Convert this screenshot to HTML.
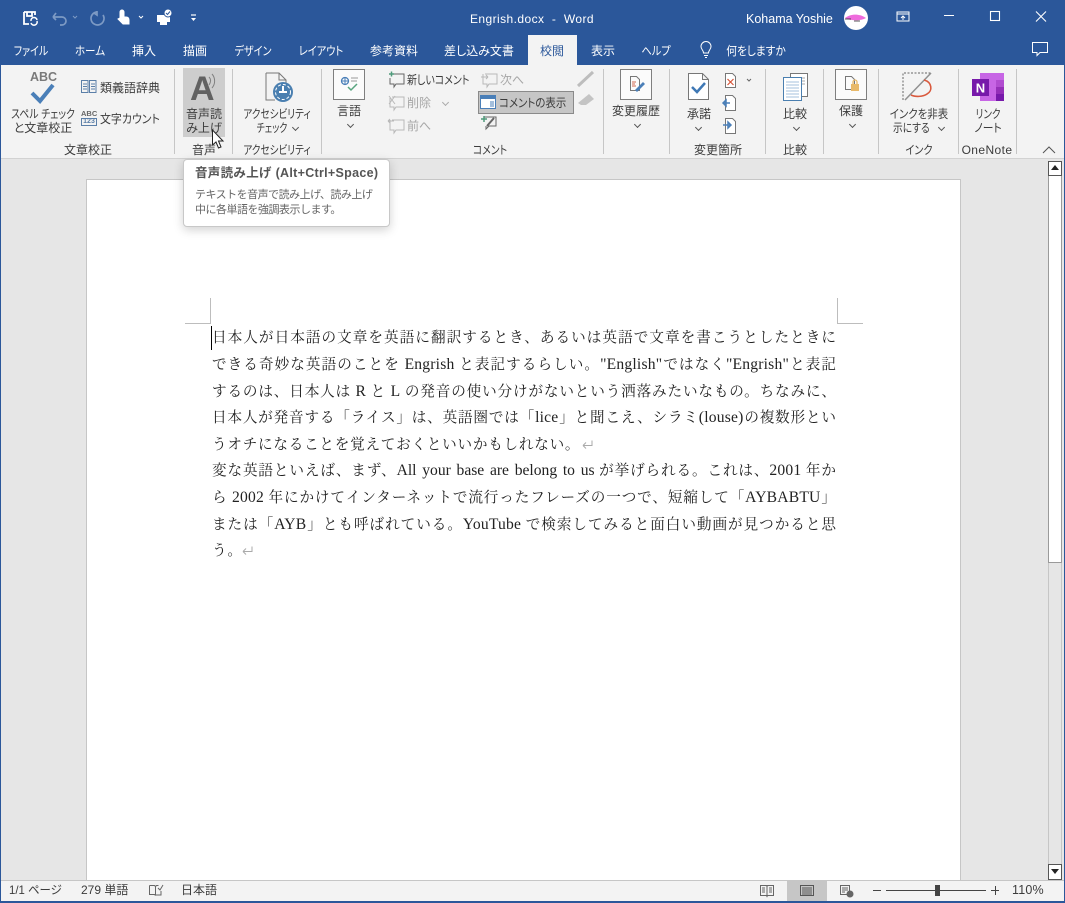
<!DOCTYPE html>
<html lang="ja"><head><meta charset="utf-8"><title>Engrish.docx - Word</title>
<style>
*{box-sizing:border-box}
html,body{margin:0;padding:0;width:1065px;height:903px;overflow:hidden;background:#e6e6e6;font-family:"Liberation Sans","Noto Sans CJK JP",sans-serif;color:#333}
.a{position:absolute;white-space:nowrap}
.t{position:absolute;white-space:nowrap;font-size:12px;line-height:15px;color:#3c3c3c;font-feature-settings:"palt";transform-origin:0 50%}
.c{text-align:center;transform:translateX(-50%);transform-origin:50% 50%}
.tab{position:absolute;top:43px;color:#fff;font-size:12px;line-height:16px;white-space:nowrap;font-feature-settings:"palt";transform:translateX(-50%)}
.sep{position:absolute;top:69px;width:1px;height:85px;background:#c6c6c6}
.dis{color:#a6a6a6}
.ch{position:absolute;width:5px;height:5px;border-right:1px solid #555;border-bottom:1px solid #555;transform:rotate(45deg)}
.l{position:absolute;left:212px;width:624px;height:20px;font-family:"Liberation Serif","Noto Serif CJK JP","Noto Serif CJK SC",serif;font-size:14.6px;line-height:20px;color:#222;white-space:nowrap;text-align:justify;text-align-last:justify;text-justify:inter-character}
.left{text-align-last:left;letter-spacing:.75px}
.e{font-size:15.6px;letter-spacing:.2px}
.b{display:inline-block;font-size:15.6px;text-align:justify;text-align-last:justify;white-space:normal;height:20px;vertical-align:top}
svg{position:absolute;overflow:visible}
</style></head><body>
<!-- title bar -->
<div class="a" style="left:0;top:0;width:1065px;height:65px;background:#2b579a"></div>
<svg style="left:0;top:0" width="240" height="36" fill="none" stroke="#fff">
<path d="M24 12h11v3M24 12v12h5M27 12v4h5v-4" stroke-width="1.800"/><path d="M31 21a3 3 0 0 1 6-1M37 21a3 3 0 0 1-6 2" stroke-width="1.500"/>
<path d="M53 17h9a4 4 0 0 1 0 8h-2M53 17l3-4M53 17l3 3" stroke="#7d9ac4" stroke-width="1.700"/>
<path d="M73 16l2 2 2-2" stroke="#7d9ac4"/>
<path d="M97 12a6.500 6.500 0 1 0 6 3M97 11v4l-3-2" stroke="#7d9ac4" stroke-width="1.700"/>
<path d="M120 12a2 2 0 0 1 4 0v5h2c2 0 3 1 3 3v4h-6l-5-5 2-1z" fill="#fff" stroke-width="1"/>
<path d="M139 16l2 2 2-2"/>
<path d="M157 15h13v7h-3v3h-7v-3h-3z" fill="#fff" stroke="none"/><circle cx="168" cy="13" r="4" fill="#fff" stroke="#2b579a"/><path d="M166 13l1.500 1.500 2.500-3" stroke="#2b579a"/>
<path d="M191 15h5" stroke-width="1.200"/><path d="M191 18h5l-2.500 3z" fill="#fff" stroke="none"/>
</svg>
<div class="a" style="left:470px;top:11px;color:#fff;font-size:12px;line-height:16px;letter-spacing:.42px">Engrish.docx&nbsp; -&nbsp; Word</div>
<div class="a" style="left:746px;top:11px;color:#fff;font-size:12.500px;line-height:16px">Kohama Yoshie</div>
<svg style="left:840px;top:0" width="225" height="36" fill="none" stroke="#fff">
<circle cx="16" cy="18" r="12" fill="#fff" stroke="none"/><path d="M5 18c5-4 14-5 21 0-5 3-15 3-21 0z" fill="#ee6bdc" stroke="none"/><path d="M5 19h6M14 21h6" stroke="#222" stroke-width=".8"/>
<path d="M57 12h12v9H57zM57 14h12M63 20v-4M61 18l2-2 2 2" stroke-width="1"/>
<path d="M104 15.500h10" stroke-width="1"/>
<rect x="150.500" y="11.500" width="9" height="9" stroke-width="1.100"/>
<path d="M196 11.500l10 10M206 11.500l-10 10" stroke-width="1.100"/>
</svg>
<!-- tabs -->
<div class="a" style="left:528px;top:35px;width:49px;height:30px;background:#f3f3f3"></div>
<div class="tab" style="left:31px;transform:translateX(-50%) scaleX(.83)">ファイル</div>
<div class="tab" style="left:90px;transform:translateX(-50%) scaleX(.88)">ホーム</div>
<div class="tab" style="left:144px">挿入</div>
<div class="tab" style="left:195px">描画</div>
<div class="tab" style="left:253px;transform:translateX(-50%) scaleX(.84)">デザイン</div>
<div class="tab" style="left:321px;transform:translateX(-50%) scaleX(.85)">レイアウト</div>
<div class="tab" style="left:394px">参考資料</div>
<div class="tab" style="left:479px">差し込み文書</div>
<div class="tab" style="left:552px;color:#2b579a">校閲</div>
<div class="tab" style="left:603px">表示</div>
<div class="tab" style="left:656px;transform:translateX(-50%) scaleX(.85)">ヘルプ</div>
<svg style="left:698px;top:41px" width="16" height="18" fill="none" stroke="#fff"><path d="M5.500 12c0-3-2.500-3.500-2.500-6.500a5 5 0 0 1 10 0c0 3-2.500 3.500-2.500 6.500zM6 14.500h4M7 16.500h2"/></svg>
<div class="tab" style="left:756px;transform:translateX(-50%) scaleX(.89)">何をしますか</div>
<svg style="left:1032px;top:42px" width="18" height="16" fill="none" stroke="#fff"><path d="M.5.500h15v10H8l-3 3v-3H.500z"/></svg>
<!-- ribbon -->
<div class="a" style="left:1px;top:65px;width:1063px;height:93px;background:#f3f3f3"></div>
<div class="a" style="left:0;top:158px;width:1065px;height:1px;background:#d2d2d2"></div>
<div class="sep" style="left:174px"></div><div class="sep" style="left:232px"></div><div class="sep" style="left:321px"></div><div class="sep" style="left:603px"></div><div class="sep" style="left:669px"></div><div class="sep" style="left:765px"></div><div class="sep" style="left:823px"></div><div class="sep" style="left:878px"></div><div class="sep" style="left:958px"></div><div class="sep" style="left:1016px"></div>
<div class="a" style="left:183px;top:68px;width:42px;height:69px;background:#cdcdcd"></div>

<div class="a" style="left:30px;top:70px;font-size:12.500px;line-height:14px;font-weight:bold;color:#7a7a7a">ABC</div>
<svg style="left:30px;top:83px" width="26" height="22" fill="none"><path d="M2 10l8 8L23 2" stroke="#4a7fb8" stroke-width="4"/></svg>
<div class="t c" style="left:43px;top:107px;transform:translateX(-50%) scaleX(.82)">スペル チェック</div>
<div class="t c" style="left:43px;top:121px">と文章校正</div>
<svg style="left:81px;top:80px" width="16" height="14" fill="none" stroke="#5b7fa8"><path d="M.5.500h6.500v12H.5zM8.500.500H15v12H8.500zM2 4h4M2 6.500h4M2 9h4M10 4h4M10 6.500h4M10 9h4" stroke-width="1"/></svg>
<div class="t" style="left:100px;top:81px">類義語辞典</div>
<div class="a" style="left:81px;top:110px;font-size:7.500px;line-height:8px;font-weight:bold;color:#666">ABC</div>
<div class="a" style="left:81px;top:118px;width:16px;height:8px;border:1px solid #5b7fa8;font-size:7px;line-height:6px;font-weight:bold;color:#5b7fa8;text-align:center">123</div>
<div class="t" style="left:100px;top:112px;transform:scaleX(.91)">文字カウント</div>
<div class="t c" style="left:88px;top:143px">文章校正</div>

<div class="a" style="left:190px;top:70px;font-size:34px;line-height:38px;font-weight:bold;color:#626262">A</div>
<svg style="left:208px;top:72px" width="12" height="20" fill="none" stroke="#808080"><path d="M1 5c2 2 2 5 0 8M4 2c3.500 4 3.500 10 0 14" stroke-width="1"/></svg>
<div class="t c" style="left:204px;top:107px">音声読</div>
<div class="t c" style="left:204px;top:121px">み上げ</div>
<svg style="left:211px;top:129px" width="13" height="21"><path d="M1.500 1v15l3.500-3 2.500 6 2.500-1-2.500-6h4.500z" fill="#fff" stroke="#222" stroke-width="1"/></svg>
<div class="t c" style="left:204px;top:143px">音声</div>

<svg style="left:265px;top:72px" width="30" height="34" fill="none"><path d="M1 1h13l7 7v12M1 1v27h9M14 1v7h7" stroke="#777"/><circle cx="18" cy="20" r="10" fill="#4a7fb0"/><circle cx="18" cy="20" r="7.500" fill="none" stroke="#fff" stroke-width="1" stroke-dasharray="3 2"/><path d="M18 14v6M14 20h8" stroke="#fff" stroke-width="2"/></svg>
<div class="t c" style="left:277px;top:107px;transform:translateX(-50%) scaleX(.8)">アクセシビリティ</div>
<div class="t c" style="left:272px;top:121px;transform:translateX(-50%) scaleX(.75)">チェック</div>
<i class="ch" style="left:293px;top:125px"></i>
<div class="t c" style="left:277px;top:143px;transform:translateX(-50%) scaleX(.8)">アクセシビリティ</div>

<div class="a" style="left:333px;top:69px;width:32px;height:31px;border:1px solid #7f7f7f;background:#fbfbfb"></div>
<svg style="left:340px;top:76px" width="20" height="16" fill="none"><circle cx="5" cy="5" r="3.500" stroke="#4a7fb8" stroke-width="1.300"/><path d="M1 5h8M5 1v8" stroke="#4a7fb8"/><path d="M8 11l3 3 6-6" stroke="#58a57f" stroke-width="1.500"/><path d="M11 2h7M11 5h6" stroke="#999"/></svg>
<div class="t c" style="left:349px;top:104px">言語</div>
<i class="ch" style="left:348px;top:122px"></i>

<svg style="left:388px;top:71px" width="110" height="70" fill="none" stroke="#8a8a8a">
<path d="M4 3h12v10H8l-2 3v-3H2V7" stroke="#666"/><path d="M1 3h5M3.500.500v5" stroke="#4f9a7b" stroke-width="1.500"/>
<g stroke="#b8b8b8"><path d="M4 26h12v10H8l-2 3v-3H2V27M1 25l6 8M7 25l-6 8"/><path d="M4 49h12v10H8l-2 3v-3H2V49M0 50h6M0 50l2-2M0 50l2 2"/><path d="M97 3h12v10h-8l-2 3v-3h-4V3M93 6h7M100 6l-2-2M100 6l-2 2"/></g>
</svg>
<div class="t" style="left:407px;top:73px;transform:scaleX(.83)">新しいコメント</div>
<div class="t dis" style="left:500px;top:73px">次へ</div>
<div class="t dis" style="left:407px;top:96px">削除</div>
<i class="ch" style="left:443px;top:100px;border-color:#aaa"></i>
<div class="t dis" style="left:407px;top:119px">前へ</div>
<div class="a" style="left:478px;top:91px;width:96px;height:23px;background:#c6c6c6;border:1px solid #8a8a8a"></div>
<svg style="left:480px;top:95px" width="17" height="15"><rect x=".5" y=".5" width="15" height="13" fill="#fff" stroke="#4a7fb8"/><rect x="1" y="1" width="15" height="3" fill="#4a7fb8"/><path d="M10 7h4M10 9h4M10 11h4" stroke="#4a7fb8"/></svg>
<div class="t" style="left:499px;top:96px;transform:scaleX(.87)">コメントの表示</div>
<svg style="left:481px;top:116px" width="18" height="16" fill="none"><path d="M3 1h12v9H8l-3 3v-3" stroke="#666"/><path d="M0 3h6M3 0v6" stroke="#4f9a7b" stroke-width="1.500"/><path d="M6 10l7-8" stroke="#666" stroke-width="2"/></svg>
<svg style="left:577px;top:70px" width="18" height="40" fill="none"><path d="M1 16L16 2" stroke="#bdbdbd" stroke-width="3"/><path d="M1 33l11-9 5 5-8 6H4z" fill="#c4c4c4"/></svg>
<div class="t c" style="left:490px;top:143px;transform:translateX(-50%) scaleX(.82)">コメント</div>

<div class="a" style="left:620px;top:69px;width:32px;height:31px;border:1px solid #7f7f7f;background:#fbfbfb"></div>
<svg style="left:630px;top:76px" width="16" height="17" fill="none"><path d="M.5.500h6l3 3v11H.5z" stroke="#777"/><path d="M2 6h4M2 8h3M2 10h4" stroke="#d06a50"/><path d="M5 14l8-8 2 2-8 8z" fill="#4a7fb8"/></svg>
<div class="t c" style="left:636px;top:104px">変更履歴</div>
<i class="ch" style="left:635px;top:122px"></i>

<svg style="left:688px;top:73px" width="22" height="28" fill="none"><path d="M.5.500h14l6 6v20H.500zM14.500.500v6h6" stroke="#777" fill="#fff"/><path d="M4 14l5 5 8-9" stroke="#3f78b5" stroke-width="2.500"/></svg>
<div class="t c" style="left:699px;top:107px">承諾</div>
<i class="ch" style="left:696px;top:125px"></i>
<svg style="left:725px;top:73px" width="24" height="62" fill="none">
<path d="M.5.500h7l3 3v11H.5z" stroke="#777" fill="#fff"/><path d="M2.500 6l6 6M8.500 6l-6 6" stroke="#d6553a" stroke-width="1.200"/>
<path d="M.5 22.500h7l3 3v12H.5z" stroke="#777" fill="#fff"/><path d="M-2 30h7M-2 30l3-3v6z" stroke="#4a7fb8" stroke-width="1.500"/>
<path d="M.5 45.500h7l3 3v12H.5z" stroke="#777" fill="#fff"/><path d="M-2 52h7M6 52l-3-3v6z" stroke="#4a7fb8" stroke-width="1.500"/>
<path d="M23 6l2 2 2-2" stroke="#666" transform="translate(-1 0)"/>
</svg>
<div class="t c" style="left:718px;top:143px">変更箇所</div>

<svg style="left:783px;top:73px" width="26" height="28"><rect x="7.500" y=".5" width="17" height="23" fill="#fff" stroke="#777"/><path d="M15 5h7M15 8h7M15 11h7" stroke="#aaa"/><rect x=".5" y="4.500" width="18" height="23" fill="#fff" stroke="#4a7fb0"/><path d="M3 9h13M3 12h13M3 15h13M3 18h13M3 21h13M3 24h13" stroke="#a6c0dc"/></svg>
<div class="t c" style="left:795px;top:107px">比較</div>
<i class="ch" style="left:794px;top:125px"></i>
<div class="t c" style="left:795px;top:143px">比較</div>

<div class="a" style="left:835px;top:69px;width:32px;height:31px;border:1px solid #7f7f7f;background:#fbfbfb"></div>
<svg style="left:845px;top:76px" width="16" height="17" fill="none"><path d="M.5.500h6l3 3v10H.5z" stroke="#777"/><rect x="6" y="8" width="8" height="7" fill="#e8b96a"/><path d="M8 8V6a2 2 0 0 1 4 0v2" stroke="#e8b96a" stroke-width="1.300"/></svg>
<div class="t c" style="left:851px;top:104px">保護</div>
<i class="ch" style="left:850px;top:122px"></i>

<svg style="left:902px;top:72px" width="32" height="30" fill="none"><path d="M1 28V1h28" stroke="#666" stroke-dasharray="2 1.500"/><path d="M29 1L3 28" stroke="#909090" stroke-width="1.500"/><path d="M22 8c8 2 9 11 3 14-4 3-12 3-16 1" stroke="#d9593d" stroke-width="1.600"/></svg>
<div class="t c" style="left:919px;top:107px;transform:translateX(-50%) scaleX(.87)">インクを非表</div>
<div class="t" style="left:893px;top:121px;transform:scaleX(.81)">示にする</div>
<i class="ch" style="left:939px;top:125px"></i>
<div class="t c" style="left:919px;top:143px;transform:translateX(-50%) scaleX(.85)">インク</div>

<svg style="left:972px;top:73px" width="32" height="29"><rect x="8" width="24" height="28" fill="#c765e5"/><rect x="24" y="7" width="8" height="7" fill="#b14cd0"/><rect x="24" y="14" width="8" height="7" fill="#952fb8"/><rect x="24" y="21" width="8" height="7" fill="#7719aa"/><rect y="6" width="17" height="17" fill="#7719aa"/><text x="8.500" y="19.500" fill="#fff" font-size="13" font-weight="bold" text-anchor="middle" font-family="Liberation Sans">N</text></svg>
<div class="t c" style="left:988px;top:107px;transform:translateX(-50%) scaleX(.8)">リンク</div>
<div class="t c" style="left:988px;top:121px;transform:translateX(-50%) scaleX(.9)">ノート</div>
<div class="t c" style="left:987px;top:143px;letter-spacing:.4px">OneNote</div>
<svg style="left:1042px;top:146px" width="14" height="8" fill="none"><path d="M1 7l6-6 6 6" stroke="#555"/></svg>

<!-- doc page -->
<div class="a" style="left:86px;top:179px;width:875px;height:702px;background:#fff;border:1px solid #c6c6c6;border-bottom:0"></div>
<div class="a" style="left:210px;top:298px;width:1px;height:25px;background:#bdbdbd"></div>
<div class="a" style="left:185px;top:323px;width:26px;height:1px;background:#bdbdbd"></div>
<div class="a" style="left:837px;top:298px;width:1px;height:25px;background:#bdbdbd"></div>
<div class="a" style="left:837px;top:323px;width:26px;height:1px;background:#bdbdbd"></div>
<div class="a" style="left:211px;top:326px;width:1px;height:24px;background:#000"></div>

<div class="l" style="top:328px">日本人が日本語の文章を英語に翻訳するとき、あるいは英語で文章を書こうとしたときに</div>
<div class="l" style="top:355px">できる奇妙な英語のことを <span class="e">Engrish</span> と表記するらしい。<span class="e">"English"</span>ではなく<span class="e">"Engrish"</span>と表記</div>
<div class="l" style="top:382px">するのは、日本人は <span class="e">R</span> と <span class="e">L</span> の発音の使い分けがないという洒落みたいなもの。ちなみに、</div>
<div class="l" style="top:408px">日本人が発音する「ライス」は、英語圏では「<span class="e">lice</span>」と聞こえ、シラミ<span class="e">(louse)</span>の複数形とい</div>
<div class="l left" style="top:435px">うオチになることを覚えておくといいかもしれない。</div>
<svg style="left:582px;top:440px" width="11" height="9" fill="none" stroke="#aaa"><path d="M10 .5v5H1M1 5.500l3-3M1 5.500l3 3"/></svg>
<div class="l" style="top:461px">変な英語といえば、まず、<span class="b" style="width:198px">All your base are belong to us</span> が挙げられる。これは、<span class="e">2001</span> 年か</div>
<div class="l" style="top:488px">ら <span class="e">2002</span> 年にかけてインターネットで流行ったフレーズの一つで、短縮して「<span class="e">AYBABTU</span>」</div>
<div class="l" style="top:515px">または「<span class="e">AYB</span>」とも呼ばれている。<span class="e">YouTube</span> で検索してみると面白い動画が見つかると思</div>
<div class="l left" style="top:541px">う。</div>
<svg style="left:242px;top:546px" width="11" height="9" fill="none" stroke="#aaa"><path d="M10 .5v5H1M1 5.500l3-3M1 5.500l3 3"/></svg>

<!-- tooltip -->
<div class="a" style="left:183px;top:159px;width:207px;height:68px;background:#fff;border:1px solid #c8c8c8;border-radius:4px;box-shadow:0 3px 10px rgba(0,0,0,.18)"></div>
<div class="a" style="left:195px;top:166px;font-size:12.500px;line-height:15px;font-weight:bold;color:#555;letter-spacing:.3px">音声読み上げ (Alt+Ctrl+Space)</div>
<div class="a" style="left:195px;top:188px;font-size:11px;line-height:14.500px;color:#666;letter-spacing:-.5px">テキストを音声で読み上げ、読み上げ<br>中に各単語を強調表示します。</div>

<!-- scrollbar -->
<div class="a" style="left:1048px;top:161px;width:14px;height:719px;background:#e6e6e6;border-left:1px solid #c6c6c6;border-right:1px solid #c6c6c6"></div>
<div class="a" style="left:1048px;top:175px;width:14px;height:388px;background:#fff;border:1px solid #9a9a9a"></div>
<div class="a" style="left:1048px;top:864px;width:14px;height:16px;background:#fff;border:1px solid #555"></div>
<div class="a" style="left:1048px;top:161px;width:14px;height:15px;background:#fff;border:1px solid #555"></div>
<svg style="left:1051px;top:165px" width="9" height="6"><path d="M0 5h8L4 0z" fill="#222"/></svg>
<svg style="left:1051px;top:869px" width="9" height="6"><path d="M0 0h8L4 5z" fill="#222"/></svg>

<!-- status bar -->
<div class="a" style="left:0;top:880px;width:1065px;height:23px;background:#f3f3f3;border-top:1px solid #c6c6c6"></div>
<div class="a" style="left:0;top:901px;width:1065px;height:2px;background:#2b579a"></div>
<div class="a" style="left:0;top:0;width:1px;height:903px;background:#2b579a"></div>
<div class="a" style="left:1064px;top:0;width:1px;height:903px;background:#2b579a"></div>
<div class="t" style="left:9px;top:883px;transform:scaleX(.95)">1/1 ページ</div>
<div class="t" style="left:81px;top:883px">279 単語</div>
<svg style="left:149px;top:884px" width="15" height="13" fill="none" stroke="#666"><path d="M.5 1.500h5l1 1 1-1h2M.5 1.500v9h5l1 1M6.500 2.500v9M7 11h5V7M9 4l2 2 3-5"/></svg>
<div class="t" style="left:181px;top:883px">日本語</div>
<div class="a" style="left:787px;top:881px;width:40px;height:20px;background:#c6c6c6"></div>
<svg style="left:760px;top:884px" width="100" height="14" fill="none" stroke="#666"><path d="M.5 1.500h6l.5 1 .5-1h6v10h-6l-.5 1-.5-1h-6zM7 2.500v9M2 4h3M2 6h3M2 8h3M9 4h3M9 6h3M9 8h3"/><path d="M40.500 1.500h13v10h-13zM42 4h10M42 6h10M42 8h10M42 10h10" stroke="#555"/><path d="M80.500 1.500h9v9h-9zM82 4h6M82 6h6M82 8h3"/><circle cx="90" cy="10" r="3.500" fill="#666" stroke="none"/></svg>
<div class="a" style="left:873px;top:890px;width:8px;height:1px;background:#444"></div>
<div class="a" style="left:886px;top:890px;width:100px;height:1px;background:#444"></div>
<div class="a" style="left:935px;top:885px;width:5px;height:11px;background:#444"></div>
<div class="a" style="left:991px;top:890px;width:8px;height:1px;background:#444"></div>
<div class="a" style="left:995px;top:886px;width:1px;height:9px;background:#444"></div>
<div class="t" style="left:1012px;top:883px;font-size:12.500px;letter-spacing:.2px">110%</div>
</body></html>
